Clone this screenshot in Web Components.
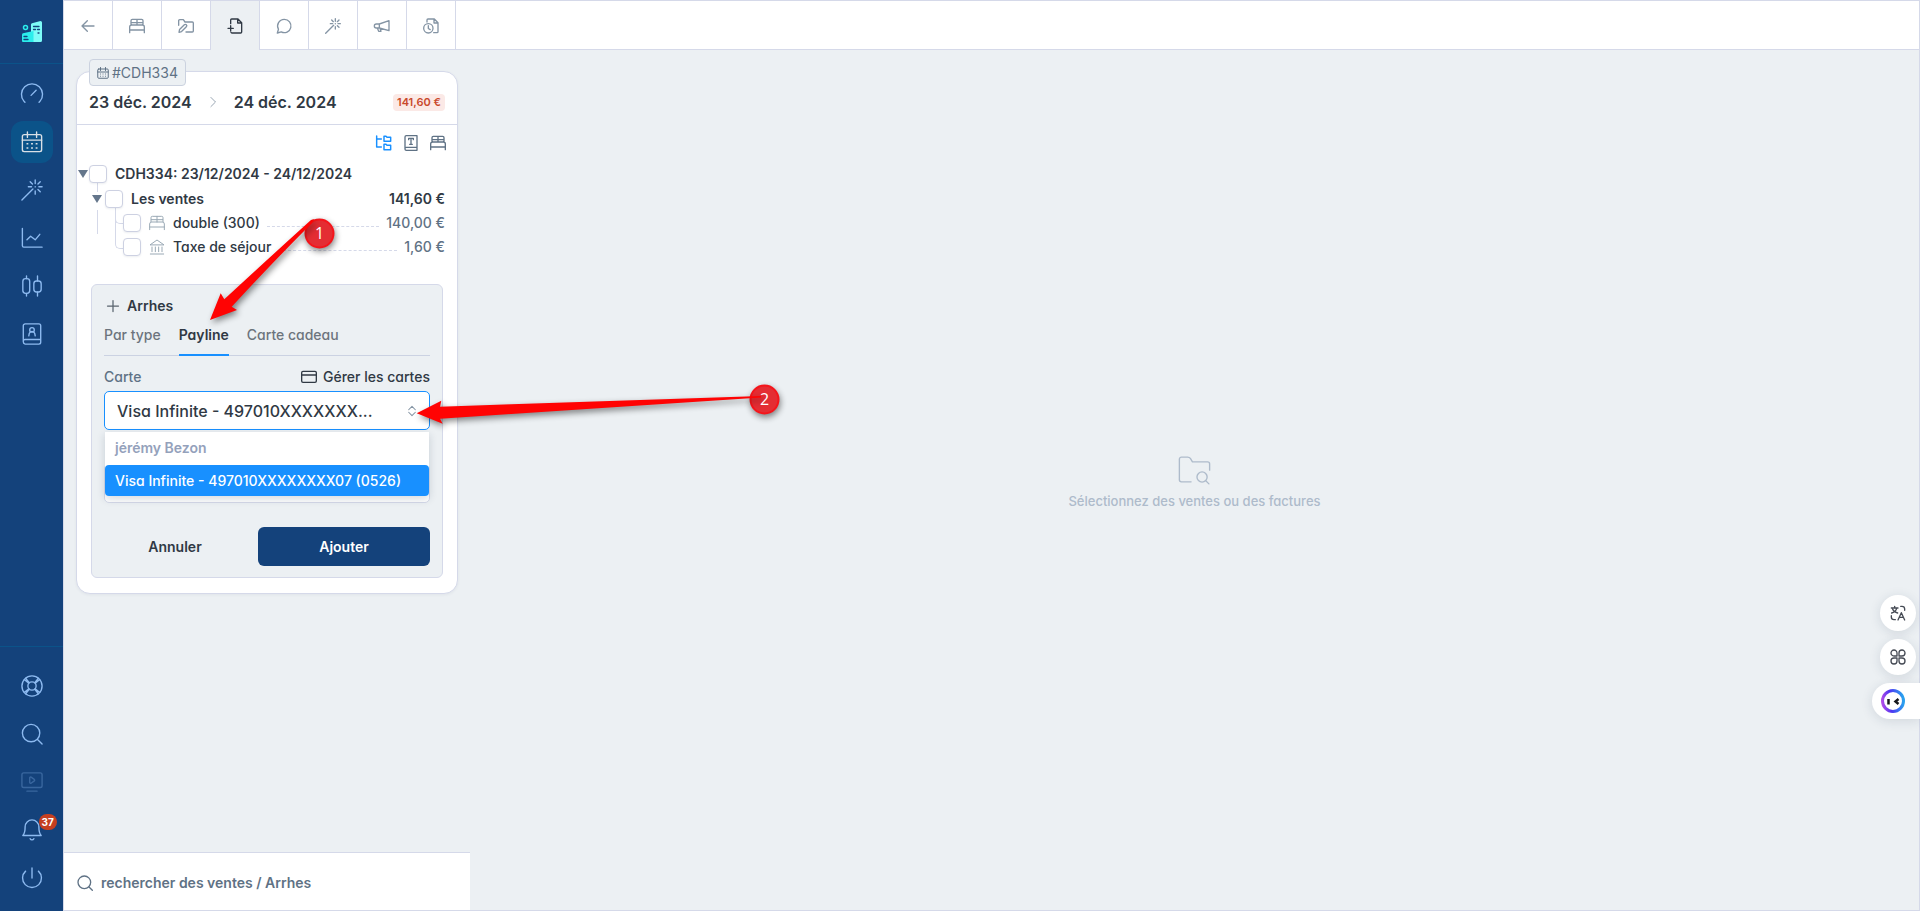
<!DOCTYPE html>
<html lang="fr">
<head>
<meta charset="utf-8">
<title>Réservation CDH334</title>
<style>
    :root {
        --navy: #14427b;
        --navy-active: #0b5389;
        --blue: #1890ff;
        --line: #d5d9e9;
        --bg: #ecf0f3;
        --dark: #303944;
        --slate: #5f7285;
        --muted: #8494a4;
    }
    body {
        margin: 0;
        font: 500 14px/20px Inter, "Liberation Sans", sans-serif;
        font-feature-settings: "cv11";
        color: var(--dark);
        background: var(--bg);
    }
</style>
</head>
<body>
<app-shell>
    <app-sidebar slot="side"></app-sidebar>
    <app-tabs slot="tabs"></app-tabs>
    <booking-card slot="left" code="#CDH334" from="23 déc. 2024" to="24 déc. 2024" total="141,60 €">
        <sales-tree></sales-tree>
        <deposit-form></deposit-form>
    </booking-card>
    <search-bar slot="search">rechercher des ventes / Arrhes</search-bar>
    <empty-state slot="right">Sélectionnez des ventes ou des factures</empty-state>
</app-shell>
<float-tools></float-tools>
<step-callouts></step-callouts>

<script>
const ICONS = {
    back: '<path d="M21 12H3M11 4l-8 8 8 8"/>',
    bed: '<path d="M1 22v-8.500a3 3 0 0 1 3-3h16a3 3 0 0 1 3 3V22M1 18h22M3 10.500V4a2 2 0 0 1 2-2h14a2 2 0 0 1 2 2v6.500M12 2v8.500M3.500 7h17"/>',
    folderEdit: '<path d="M1 11V4a1.500 1.500 0 0 1 1.500-1.500h5.500l2.500 3.500H21.500A1.500 1.500 0 0 1 23 7.500v12a1.500 1.500 0 0 1-1.500 1.500H12"/><path d="M1.500 21.500l.8-4.200 7.200-7.200a2 2 0 0 1 3 3l-7.200 7.200z"/>',
    fileAdd: '<path d="M5.500 8.500V3A1.500 1.500 0 0 1 7 1.500h9.500L22 7v14a1.500 1.500 0 0 1-1.500 1.500h-13A1.500 1.500 0 0 1 6 21.500M16 1.500V7.500h6M5.500 11.500v8M1.500 15.500h8"/>',
    chat: '<path d="M12.500 2a10 10 0 1 1-4.600 18.900L2 22.500l1.700-5.600A10 10 0 0 1 12.500 2z"/>',
    wand: '<path d="M1 23L13 11M15.500 1v4M15.500 13v3.500M8 8.500h3.500M19.500 8.500H23M10 3l2.500 2.500M21 3l-2.500 2.500M21 14l-2.500-2.500M15.500 8.400v.2"/>',
    horn: '<path d="M22.500 4v15L8 15H3.500a3 3 0 0 1 0-6H8zM8 9v6M5 15l2 5h3.500L9 15.500"/>',
    fileClock: '<path d="M6 6V3a1.500 1.500 0 0 1 1.500-1.500H17L22.500 7v13.500A1.500 1.500 0 0 1 21 22h-5M16.500 1.500v6h6"/><circle cx="8" cy="15.500" r="7"/><path d="M8 11.500v4.200l2.800 1.800"/>',
    gauge: '<path d="M3.300 20a11.500 11.500 0 1 1 17.400 0l-1 1M3.300 20l1 1M11 13.500L16.500 8"/>',
    calendar: '<rect x="1.500" y="4" width="21" height="18.500" rx="2"/><path d="M1.500 10h21M7 1v6M17 1v6"/><path stroke-width="1.700" stroke-linecap="butt" d="M6 14h2M11 14h2M16 14h2M6 18.500h2M11 18.500h2M16 18.500h2"/>',
    chart: '<path d="M1.500 1.500v19a1.500 1.500 0 0 0 1.500 1.500h20M6.500 14l4-4 5 4 5-6"/>',
    candles: '<rect x="2" y="4" width="7.500" height="16" rx="3"/><rect x="14" y="6.500" width="8" height="12" rx="3"/><path d="M6 1v3M6 20v3M18 1v5.500M18 18.500V23"/>',
    contacts: '<path d="M4.500 23A2.500 2.500 0 0 1 2.500 20.500V3a2 2 0 0 1 2-2h15a2 2 0 0 1 2 2v18a2 2 0 0 1-2 2zM2.500 20.500a2 2 0 0 1 2-2.500h17"/><circle cx="12" cy="7.500" r="2.500"/><path d="M8.500 14l.5-2.500a3.100 3.100 0 0 1 6 0l.5 2.500"/>',
    help: '<circle cx="12" cy="12" r="11"/><circle cx="12" cy="12" r="4.500"/><path d="M5 3.500l4 5M3.500 5l5 4M19 3.500l-4 5M20.500 5l-5 4M5 20.500l4-5M3.500 19l5-4M19 20.500l-4-5M20.500 19l-5-4"/>',
    search: '<circle cx="11" cy="11" r="9.500"/><path d="M18 18l5 5"/>',
    screen: '<rect x="1" y="2" width="22" height="16" rx="2"/><path d="M6.500 22h11M9.500 7.500v5a1 1 0 0 0 1.500.8l3.500-2.500a1 1 0 0 0 0-1.600L11 6.700a1 1 0 0 0-1.500.8z"/>',
    bell: '<path d="M12 1a7.500 7.500 0 0 1 7.500 7.500c0 7 2.500 9.500 2.500 9.500H2s2.500-2.500 2.500-9.500A7.500 7.500 0 0 1 12 1zM10 21.500a2.200 2.200 0 0 0 4 0"/>',
    power: '<path d="M12 1v11M5 4.500a10.300 10.300 0 1 0 14 0"/>',
    chevron: '<path d="M7 1l11 11L7 23"/>',
    tree: '<path d="M1 1.500v16.500h7M1 6h7M12 2h3l1.500 1.500H22v6H12zM12 14h3l1.500 1.500H22v6.500H12z"/>',
    ledger: '<path d="M5 23a2 2 0 0 1-2-2V3a2 2 0 0 1 2-2h16v22zM3 21a2 2 0 0 1 2-2.500h16M8.500 7V5h7v2M12 5v9M10 14h4"/>',
    bank: '<path d="M2 8.500L12 1.500l10 7zM4.500 12v7M9.500 12v7M14.500 12v7M19.500 12v7M2 22.500h20"/>',
    plus: '<path d="M12 1v22M1 12h22"/>',
    card: '<rect x="1" y="3.500" width="22" height="16.500" rx="2"/><path d="M1 9h22"/>',
    folderSearch: '<path d="M9.500 19.500H2.500A1.500 1.500 0 0 1 1 18V3a1.500 1.500 0 0 1 1.500-1.500H7c1 0 1.500.3 2 1l1.500 2.500H21.500A1.500 1.500 0 0 1 23 6.500V11"/><circle cx="17.500" cy="16" r="3.700"/><path d="M20.200 18.800L22.500 21"/>',
    updown: '<path d="M4 9l8-8 8 8M4 15l8 8 8-8"/>',
    translate: '<path d="M2 4.500h10M7 2v2.500M10 4.500C9.500 8 6 11 2.500 12M4 6.500c1 2.500 4 5 7.500 5.500M16 2h2a4 4 0 0 1 4 4v2M2 16v2a4 4 0 0 0 4 4h2M12 22.500l5-11 5 11M14 18.500h6"/>',
    clover: '<path d="M10.500 10.500H6A4.500 4.500 0 1 1 10.500 6zM13.500 10.500V6a4.500 4.500 0 1 1 4.500 4.500zM10.500 13.500V18A4.500 4.500 0 1 1 6 13.500zM13.500 13.500H18a4.500 4.500 0 1 1-4.500 4.500z"/>'
}

class BaseElement extends HTMLElement {
    constructor() {
        super()
        this.attachShadow({ mode: "open" })
    }
    connectedCallback() {
        const template = document.createElement("template")
        template.innerHTML = `<style>*{box-sizing:border-box}${this.getStyles()}</style>${this.getTemplate()}`
        this.shadowRoot.replaceChildren(template.content.cloneNode(true))
    }
}

class UiIcon extends BaseElement {
    getTemplate() {
        const size = this.getAttribute("size") || 16
        return `<svg width="${size}" height="${size}" viewBox="0 0 24 24" aria-hidden="true">${ICONS[this.getAttribute("name")]}</svg>`
    }
    getStyles() {
        return `
            :host { display: inline-flex; flex: none; }
            svg {
                overflow: visible;
                fill: none;
                stroke: currentColor;
                stroke-width: var(--stroke, 1.5);
                stroke-linecap: round;
                stroke-linejoin: round;
            }
        `
    }
}

class AppShell extends BaseElement {
    getTemplate() {
        return `
            <slot name="side"></slot>
            <div class="page">
                <slot name="tabs"></slot>
                <main>
                    <section>
                        <slot name="left"></slot>
                        <slot name="search"></slot>
                    </section>
                    <slot name="right"></slot>
                </main>
            </div>
        `
    }
    getStyles() {
        return `
            :host { display: grid; grid-template-columns: 63px 1fr; min-height: 100vh; }
            .page { display: flex; flex-direction: column; border: 1px solid var(--line); }
            main { flex: 1; display: grid; grid-template-columns: 406px 1fr; }
            section { display: flex; flex-direction: column; justify-content: space-between; }
        `
    }
}

class AppSidebar extends BaseElement {
    link(name, label, extra = "") {
        return `<a href="#" aria-label="${label}" ${extra}><ui-icon name="${name}" size="22"></ui-icon></a>`
    }
    getTemplate() {
        return `
            <a href="#" class="logo" aria-label="Accueil">
                <svg width="22" height="22" viewBox="0 0 22 22">
                    <path fill="#7dfcf8" d="M10 3.500Q10 2.500 11 2.200L19.500 0Q21 0 21 1.500V19.500Q21 21 19.500 21H9V11h1z"/>
                    <path fill="#2bedec" d="M1 13.500Q1 12.500 2 12.200L12.500 10V21H2Q1 21 1 20z"/>
                    <circle cx="4.500" cy="6.500" r="2" fill="none" stroke="#2bedec" stroke-width="1.500"/>
                    <path stroke="#14427b" stroke-width="1.300" stroke-linecap="round" d="M12.500 5.500h5.500M12.500 8.500h2M16.500 8.500h2M3 15.500h1M3 18.500h4M17 12h1M3 15.500h3"/>
                </svg>
            </a>
            <nav aria-label="Menu principal">
                ${this.link("gauge", "Tableau de bord")}
                ${this.link("calendar", "Planning", 'class="active" aria-current="page"')}
                ${this.link("wand", "Assistant")}
                ${this.link("chart", "Statistiques")}
                ${this.link("candles", "Tarifs")}
                ${this.link("contacts", "Clients")}
            </nav>
            <nav class="bottom" aria-label="Outils">
                ${this.link("help", "Aide")}
                ${this.link("search", "Rechercher")}
                ${this.link("screen", "Vidéos", 'class="off"')}
                <a href="#" aria-label="Notifications"><ui-icon name="bell" size="22"></ui-icon><b>37</b></a>
                ${this.link("power", "Déconnexion")}
            </nav>
        `
    }
    getStyles() {
        return `
            :host { display: flex; flex-direction: column; background: var(--navy); color: #8dbaf0; --stroke: 1.5; }
            a { color: inherit; display: flex; align-items: center; justify-content: center; }
            .logo { height: 64px; border-bottom: 1px solid var(--navy-active); }
            nav { display: flex; flex-direction: column; align-items: center; gap: 6px; padding: 9px 0; }
            nav a { position: relative; width: 42px; height: 42px; border-radius: 12px; }
            .active { background: var(--navy-active); color: #d9e0e6; }
            .off { opacity: .3; }
            .bottom { margin-top: auto; border-top: 1px solid var(--navy-active); padding: 18px 0 12px; }
            b {
                position: absolute;
                left: 28px;
                top: 5px;
                padding: 0 3px;
                border-radius: 8px;
                background: #c53f20;
                color: #fff;
                font-size: 10px;
                font-weight: 700;
                line-height: 16px;
            }
        `
    }
}

class AppTabs extends BaseElement {
    getTemplate() {
        const tabs = [
            ["back", "Retour"], ["bed", "Séjour"], ["folderEdit", "Dossier"], ["fileAdd", "Facturation"],
            ["chat", "Messages"], ["wand", "Automatisation"], ["horn", "Annonces"], ["fileClock", "Historique"]
        ]
        return `<nav>${tabs.map(([icon, label]) => `
            <a href="#" aria-label="${label}" ${icon === "fileAdd" ? 'class="active"' : ""}><ui-icon name="${icon}"></ui-icon></a>`).join("")}
        </nav>`
    }
    getStyles() {
        return `
            :host { display: block; background: #fff; color: var(--muted); --stroke: 2; }
            nav { display: flex; height: 49px; box-shadow: inset 0 -1px var(--line); }
            a { width: 49px; display: flex; align-items: center; justify-content: center; color: inherit; border-right: 1px solid var(--line); }
            .active { background: var(--bg); color: var(--dark); }
        `
    }
}

class BookingCard extends BaseElement {
    getTemplate() {
        return `
            <article>
                <a href="#" class="code"><ui-icon name="calendar" size="12"></ui-icon>${this.getAttribute("code")}</a>
                <header>
                    <span>${this.getAttribute("from")}</span>
                    <ui-icon name="chevron" size="10"></ui-icon>
                    <span>${this.getAttribute("to")}</span>
                    <mark>${this.getAttribute("total")}</mark>
                </header>
                <slot></slot>
            </article>
        `
    }
    getStyles() {
        return `
            :host { display: block; padding: 21px 12px 12px; }
            article { position: relative; background: #fff; border: 1px solid var(--line); border-radius: 14px; box-shadow: 0 1px 3px #1e32500f; }
            .code {
                position: absolute;
                left: 12px;
                top: -13px;
                display: flex;
                align-items: center;
                gap: 3px;
                padding: 1px 7px;
                border: 1px solid #cbd2df;
                border-radius: 4px;
                background: var(--bg);
                color: var(--slate);
                font-weight: 400;
                line-height: 23px;
                text-decoration: none;
                --stroke: 2;
            }
            header { display: flex; align-items: center; gap: 16px; height: 53px; padding: 8px 12px 0; border-bottom: 1px solid var(--line); font-size: 16px; font-weight: 600; }
            header ui-icon { color: var(--muted); --stroke: 2; }
            mark {
                margin-left: auto;
                padding: 0 4px;
                border-radius: 4px;
                background: #fbe9e6;
                color: #c9482c;
                font-size: 11px;
                font-weight: 600;
                line-height: 17px;
            }
        `
    }
}

class SalesTree extends BaseElement {
    getTemplate() {
        return `
            <div class="views">
                <button class="on" aria-label="Arborescence"><ui-icon name="tree"></ui-icon></button>
                <button aria-label="Journal"><ui-icon name="ledger"></ui-icon></button>
                <button aria-label="Chambres"><ui-icon name="bed"></ui-icon></button>
            </div>
            <ul>
                <li><div class="row root"><i></i><input type="checkbox" id="all"><label for="all">CDH334: 23/12/2024 - 24/12/2024</label></div>
                    <ul class="group">
                        <li><div class="row main"><i></i><input type="checkbox" id="sales"><label for="sales">Les ventes</label><b>141,60 €</b></div>
                            <ul class="items">
                                <li><div class="row"><input type="checkbox" id="room"><ui-icon name="bed"></ui-icon><label for="room">double (300)</label><hr><span>140,00 €</span></div></li>
                                <li><div class="row"><input type="checkbox" id="tax"><ui-icon name="bank"></ui-icon><label for="tax">Taxe de séjour</label><hr><span>1,60 €</span></div></li>
                            </ul>
                        </li>
                    </ul>
                </li>
            </ul>
        `
    }
    getStyles() {
        return `
            :host { display: block; color: var(--dark); }
            .views { display: flex; justify-content: flex-end; gap: 11px; padding: 10px 11px; }
            button { display: flex; padding: 0; border: 0; background: none; color: var(--slate); --stroke: 2; }
            button.on { color: var(--blue); --stroke: 2.2; }
            ul { position: relative; margin: 0; padding: 0; list-style: none; }
            .row { display: flex; align-items: center; height: 24px; padding-right: 12px; }
            .root { height: 26px; }
            .root, .main { font-weight: 600; }
            i { width: 10px; height: 8px; margin: 0 1px; background: #64768b; clip-path: polygon(0 0, 100% 0, 50% 100%); }
            .group i { margin-right: 3px; }
            input { position: relative; z-index: 1; appearance: none; width: 18px; height: 18px; margin: 0; border: 1px solid #cdd1e2; border-radius: 4px; background: #fff; box-shadow: 0 1px 2px #1e325014; }
            label { padding-left: 8px; }
            .group { padding-left: 14px; }
            .items { padding-left: 32px; }
            .items ui-icon { padding-left: 8px; color: #9aa9b5; }
            b { margin-left: auto; font-weight: 600; }
            span { color: var(--slate); }
            hr { flex: 1; margin: 6px 7px 0; border: 0; border-top: 1px dashed var(--line); }

            /* branches between a parent box and its children */
            .group::before, .group::after, .items::before, .items::after { content: ""; position: absolute; }
            .group::before { left: 20px; top: -4px; height: 9px; border-left: 1px solid var(--line); }
            .group::after { left: 20px; top: 23px; height: 24px; border-left: 1px solid var(--line); }
            .items::before { left: 24px; top: -4px; width: 9px; height: 16px; border: solid var(--line); border-width: 0 0 1px 1px; border-radius: 0 0 0 5px; }
            .items::after { left: 24px; top: 8px; width: 9px; height: 29px; border: solid var(--line); border-width: 0 0 1px 1px; border-radius: 0 0 0 5px; }
        `
    }
}

class DepositForm extends BaseElement {
    getTemplate() {
        return `
            <form>
                <h2><ui-icon name="plus" size="12"></ui-icon>Arrhes</h2>
                <nav>
                    <a href="#">Par type</a>
                    <a href="#" class="active">Payline</a>
                    <a href="#">Carte cadeau</a>
                </nav>
                <div class="head">
                    <label for="card">Carte</label>
                    <a href="#"><ui-icon name="card"></ui-icon>Gérer les cartes</a>
                </div>
                <div class="field">
                    <select id="card"><option>Visa Infinite - 497010XXXXXXX...</option></select>
                    <ui-icon name="updown" size="10"></ui-icon>
                    <ul role="listbox" aria-label="Cartes">
                        <li class="name" role="presentation">jérémy Bezon</li>
                        <li role="option" aria-selected="true">Visa Infinite - 497010XXXXXXXX07 (0526)</li>
                    </ul>
                </div>
                <input type="text" aria-label="Montant">
                <footer>
                    <button type="button">Annuler</button>
                    <button type="button" class="primary">Ajouter</button>
                </footer>
            </form>
        `
    }
    getStyles() {
        return `
            :host { display: block; padding: 25px 14px 15px; }
            form { display: flex; flex-direction: column; padding: 11px 12px; border: 1px solid var(--line); border-radius: 6px; background: var(--bg); }
            h2 { display: flex; align-items: center; gap: 8px; margin: 0; padding-left: 3px; font-size: 14px; font-weight: 600; line-height: 20px; --stroke: 2.5; }
            h2 ui-icon { color: #59636e; }
            a { color: inherit; text-decoration: none; }
            nav { display: flex; gap: 18px; border-bottom: 1px solid #cbd2e2; color: #6c747d; }
            nav a { padding: 9px 0; }
            nav .active { margin-bottom: -1px; border-bottom: 2px solid var(--blue); color: var(--dark); font-weight: 600; }
            .head { display: flex; justify-content: space-between; padding: 11px 0 4px; --stroke: 2; }
            .head label { color: var(--slate); }
            .head a { display: flex; align-items: center; gap: 6px; }
            .field { position: relative; display: flex; align-items: center; }
            select, input { width: 100%; height: 39px; border: 1px solid var(--line); border-radius: 5px; background: #fff; font: inherit; }
            select { appearance: none; padding: 0 40px 0 12px; border-color: var(--blue); outline: none; color: var(--dark); font-size: 16px; }
            .field ui-icon { margin-left: -23px; color: var(--muted); --stroke: 2.5; }
            ul {
                position: absolute;
                z-index: 1;
                top: 41px;
                left: 1px;
                right: 1px;
                margin: 0;
                padding: 0;
                list-style: none;
                border-radius: 0 0 4px 4px;
                background: #fff;
                box-shadow: 0 3px 8px #1e32502e;
            }
            li { padding: 6px 10px 5px; border-radius: 4px; background: var(--blue); color: #fff; }
            .name { padding: 6px 10px 7px; background: none; color: #94a1bb; font-weight: 600; }
            input { margin-top: 34px; }
            footer { display: grid; grid-template-columns: 142px 1fr; gap: 12px; padding-top: 24px; }
            button { height: 39px; border: 0; border-radius: 6px; background: none; color: var(--dark); font: inherit; }
            .primary { background: var(--navy); color: #fff; }
            button, .primary { font-weight: 600; }
        `
    }
}

class SearchBar extends BaseElement {
    getTemplate() {
        return `<a href="#"><ui-icon name="search"></ui-icon><slot></slot></a>`
    }
    getStyles() {
        return `
            :host { display: block; border-top: 1px solid var(--line); background: #fff; --stroke: 2; }
            a { display: flex; align-items: center; gap: 8px; height: 57px; padding: 2px 13px 0; color: var(--slate); font-weight: 600; text-decoration: none; }
        `
    }
}

class EmptyState extends BaseElement {
    getTemplate() {
        return `<ui-icon name="folderSearch" size="33"></ui-icon><p><slot></slot></p>`
    }
    getStyles() {
        return `
            :host { display: flex; flex-direction: column; align-items: center; justify-content: center; gap: 3px; padding-top: 5px; color: #aebbcb; font-size: 13px; --stroke: 1; }
            p { margin: 0; }
        `
    }
}

class FloatTools extends BaseElement {
    getTemplate() {
        return `
            <button aria-label="Traduire"><ui-icon name="translate"></ui-icon></button>
            <button aria-label="Applications"><ui-icon name="clover"></ui-icon></button>
            <button class="bot" aria-label="Assistant">
                <svg width="24" height="24" viewBox="0 0 24 24">
                    <defs><linearGradient id="ring" x1="0" y1=".7" x2="1" y2=".6">
                        <stop offset="0" stop-color="#b04be8"/><stop offset=".4" stop-color="#4d35f2"/><stop offset="1" stop-color="#2aa0ee"/>
                    </linearGradient></defs>
                    <circle cx="12" cy="12" r="10.500" fill="#fff" stroke="url(#ring)" stroke-width="3"/>
                    <path fill="none" stroke="#16181d" stroke-width="2.500" d="M7.500 10v5.500M17.500 10l-3 2.500 3 2.500"/>
                </svg>
            </button>
        `
    }
    getStyles() {
        return `
            :host { position: fixed; right: 0; bottom: 192px; display: flex; flex-direction: column; align-items: flex-end; gap: 8px; color: #464b55; --stroke: 2; }
            button { display: flex; align-items: center; justify-content: center; width: 36px; height: 36px; margin-right: 4px; padding: 0; border: 0; border-radius: 18px; background: #fff; color: inherit; box-shadow: 0 2px 12px #1e325022; }
            .bot { width: 48px; margin: 0; padding-right: 6px; border-radius: 18px 0 0 18px; }
        `
    }
}

class StepCallouts extends BaseElement {
    getTemplate() {
        return `
            <svg width="800" height="450">
                <g class="dot"><circle cx="319.500" cy="233.500" r="14"/><circle cx="764.500" cy="399.500" r="14"/></g>
                <path d="M210 320l10.700-26.700 3.600 6Q270 257 311 220l3-1-2 4Q275 260 231.700 306.700l5.300 3.300z"/>
                <path d="M416.700 413.300l24.600-12.600-1.300 6L761 396v1.500L440 418.700l2.700 5z"/>
                <text x="319.500" y="239">1</text>
                <text x="764.500" y="405">2</text>
            </svg>
        `
    }
    getStyles() {
        return `
            :host { position: absolute; left: 0; top: 0; z-index: 2; pointer-events: none; }
            svg { display: block; }
            path { fill: #ff0303; filter: drop-shadow(2px 3px 3px #0007); }
            .dot { fill: #e42d33; stroke: #f5151b; stroke-width: 2; filter: drop-shadow(1px 3px 3px #0007); }
            text { fill: #fff; font: 400 16px "Open Sans", sans-serif; text-anchor: middle; }
        `
    }
}

customElements.define("ui-icon", UiIcon)
customElements.define("app-shell", AppShell)
customElements.define("app-sidebar", AppSidebar)
customElements.define("app-tabs", AppTabs)
customElements.define("booking-card", BookingCard)
customElements.define("sales-tree", SalesTree)
customElements.define("deposit-form", DepositForm)
customElements.define("search-bar", SearchBar)
customElements.define("empty-state", EmptyState)
customElements.define("float-tools", FloatTools)
customElements.define("step-callouts", StepCallouts)
</script>
</body>
</html>
